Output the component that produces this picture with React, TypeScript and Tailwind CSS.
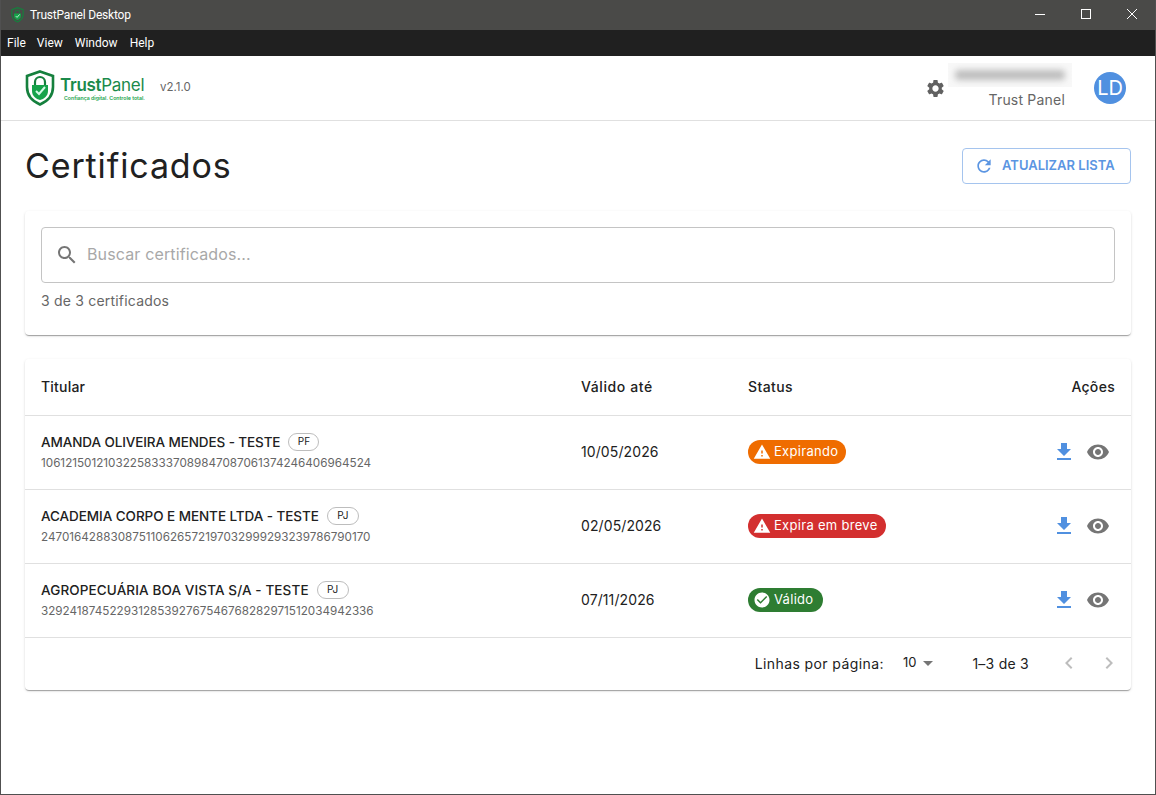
const sans = "font-['Inter',sans-serif]";
const cardShadow = "shadow-[0_2px_1px_-1px_rgba(0,0,0,0.2),0_1px_1px_0_rgba(0,0,0,0.14),0_1px_3px_0_rgba(0,0,0,0.12)]";

const rows = [
  { name: "AMANDA OLIVEIRA MENDES - TESTE", track: "tracking-[-0.1px]", kind: "PF", chip: "w-[31px]", id: "106121501210322583337089847087061374246406964524", date: "10/05/2026", status: "Expirando", color: "bg-[#ef6c00]", w: "w-[98px]", icon: "warn" },
  { name: "ACADEMIA CORPO E MENTE LTDA - TESTE", track: "tracking-[-0.06px]", kind: "PJ", chip: "w-[32px]", id: "247016428830875110626572197032999293239786790170", date: "02/05/2026", status: "Expira em breve", color: "bg-[#d32f2f]", w: "w-[138px]", icon: "warn" },
  { name: "AGROPECUÁRIA BOA VISTA S/A - TESTE", track: "tracking-[0.12px]", kind: "PJ", chip: "w-[32px]", id: "329241874522931285392767546768282971512034942336", date: "07/11/2026", status: "Válido", color: "bg-[#2e7d32]", w: "w-[75px]", icon: "ok" },
];

function Shield({ size }: { size: number }) {
  return (
    <svg width={size} height={size * 1.2} viewBox="0 0 30 36">
      <path d="M15 1.5 L28 6 V17 C28 26 22 31.5 15 34.5 C8 31.5 2 26 2 17 V6 Z" fill="none" stroke="#15803d" strokeWidth="2.6" />
      <path d="M10 15 V12 a5 5 0 0 1 10 0 V15" fill="none" stroke="#15803d" strokeWidth="2.2" />
      <path d="M7 15 H23 V21 C23 26 19 29 15 30 C11 29 7 26 7 21 Z" fill="#16a34a" />
      <path d="M11 21 L14 24 L20 17" fill="none" stroke="#d1fae5" strokeWidth="2" />
    </svg>
  );
}

function StatusIcon({ type }: { type: string }) {
  if (type === "warn") {
    return (
      <svg width="18" height="18" viewBox="0 0 24 24" fill="#fff">
        <path d="M1 21h22L12 2 1 21zm12-3h-2v-2h2v2zm0-4h-2v-4h2v4z" />
      </svg>
    );
  }
  return (
    <svg width="18" height="18" viewBox="0 0 24 24" fill="#fff">
      <path d="M12 2C6.48 2 2 6.48 2 12s4.48 10 10 10 10-4.48 10-10S17.52 2 12 2zm-2 15-5-5 1.41-1.41L10 14.17l7.59-7.59L19 8l-9 9z" />
    </svg>
  );
}

export default function App() {
  return (
    <div className={`h-[795px] w-[1156px] overflow-hidden flex flex-col bg-white border-l border-b border-r border-[#505050] ${sans}`}>
      <div className="h-[30px] shrink-0 bg-[#4a4a48] flex items-center -mx-px font-['Roboto',sans-serif]">
        <div className="ml-[11px]"><Shield size={13} /></div>
        <span className="ml-[6px] text-[12px] text-white tracking-[-0.2px]">TrustPanel Desktop</span>
        <div className="ml-auto mr-px flex items-center text-white">
          <svg width="46" height="30" viewBox="0 0 46 30"><path d="M18 14.5h10" stroke="#fff" strokeWidth="1" /></svg>
          <svg width="46" height="30" viewBox="0 0 46 30"><rect x="18.5" y="9.5" width="9" height="9" fill="none" stroke="#fff" /></svg>
          <svg width="46" height="30" viewBox="0 0 46 30"><path d="M18 9l10 10M28 9L18 19" stroke="#fff" strokeWidth="1" /></svg>
        </div>
      </div>
      <div className="h-[26px] shrink-0 bg-[#202020] flex items-center -mx-px pl-[7px] gap-[12px] text-[12px] text-white font-['Roboto',sans-serif]">
        <span>File</span><span className="-ml-px">View</span><span>Window</span><span>Help</span>
      </div>

      <header className="h-[65px] shrink-0 border-b border-[#e0e0e0] flex items-center pl-[24px] pr-[29px]">
        <Shield size={30} />
        <div className="ml-[5px] flex flex-col">
          <span className="text-[17px] leading-[20px] text-[#1b8a4b] tracking-[-0.3px]">
            <span className="font-semibold">Trust</span>Panel
          </span>
          <span className="ml-[4px] text-[5.2px] leading-[6px] text-[#16a34a] font-semibold">Confiança digital. Controle total.</span>
        </div>
        <span className="ml-[15px] text-[11.5px] text-[#666]">v2.1.0</span>
        <div className="ml-auto flex items-center">
          <svg width="21" height="21" viewBox="0 0 24 24" fill="#616161">
            <path d="M19.14 12.94c.04-.3.06-.61.06-.94 0-.32-.02-.64-.07-.94l2.03-1.58c.18-.14.23-.41.12-.61l-1.92-3.32c-.12-.22-.37-.29-.59-.22l-2.39.96c-.5-.38-1.03-.7-1.62-.94l-.36-2.54c-.04-.24-.24-.41-.48-.41h-3.84c-.24 0-.43.17-.47.41l-.36 2.54c-.59.24-1.13.57-1.62.94l-2.39-.96c-.22-.08-.47 0-.59.22L2.74 8.87c-.12.21-.08.47.12.61l2.03 1.58c-.05.3-.09.63-.09.94s.02.64.07.94l-2.03 1.58c-.18.14-.23.41-.12.61l1.92 3.32c.12.22.37.29.59.22l2.39-.96c.5.38 1.03.7 1.62.94l.36 2.54c.05.24.24.41.48.41h3.84c.24 0 .44-.17.47-.41l.36-2.54c.59-.24 1.13-.56 1.62-.94l2.39.96c.22.08.47 0 .59-.22l1.92-3.32c.12-.22.07-.47-.12-.61l-2.01-1.58zM12 15.6c-1.98 0-3.6-1.62-3.6-3.6s1.62-3.6 3.6-3.6 3.6 1.62 3.6 3.6-1.62 3.6-3.6 3.6z" />
          </svg>
          <div className="ml-[2px] w-[124px] flex flex-col items-end pb-[3px]">
            <div className="h-[24px] w-[124px] bg-[#f8f8f8] flex items-center justify-center">
              <div className="h-[10px] w-[110px] bg-[#bdbdbd] blur-[3px] rounded" />
            </div>
            <span className="text-[14px] leading-[20px] text-[#666] mr-[7px] mt-[3px] tracking-[0.2px]">Trust Panel</span>
          </div>
          <div className="ml-[22px] w-[32px] h-[32px] rounded-full bg-[#5090e0] text-white text-[20px] flex items-center justify-center">LD</div>
        </div>
      </header>

      <main className="flex-1 bg-white px-[24px]">
        <div className="flex items-center justify-between h-[90px]">
          <h1 className="text-[34px] leading-none text-[#212121] tracking-[0.87px]">Certificados</h1>
          <button className="h-[36px] w-[169px] border border-[#a5c4ee] rounded flex items-center pl-[11px] gap-[8px] text-[#5b95e2] text-[13px] font-semibold">
            <svg width="20" height="20" viewBox="0 0 24 24" fill="#5b95e2">
              <path d="M17.65 6.35C16.2 4.9 14.21 4 12 4c-4.42 0-7.99 3.58-7.99 8s3.57 8 7.99 8c3.73 0 6.84-2.55 7.73-6h-2.08c-.82 2.33-3.04 4-5.65 4-3.31 0-6-2.69-6-6s2.69-6 6-6c1.66 0 3.1.69 4.22 1.78L13 11h7V4l-2.35 2.35z" />
            </svg>
            ATUALIZAR LISTA
          </button>
        </div>

        <section className={`h-[124px] rounded ${cardShadow} px-[16px] pt-[16px]`}>
          <div className="h-[56px] border border-[#c4c4c4] rounded flex items-center pl-[13px]">
            <svg width="24" height="24" viewBox="0 0 24 24" fill="#757575">
              <path d="M15.5 14h-.79l-.28-.27C15.41 12.59 16 11.11 16 9.5 16 5.91 13.09 3 9.5 3S3 5.91 3 9.5 5.91 16 9.5 16c1.61 0 3.09-.59 4.23-1.57l.27.28v.79l5 4.99L20.49 19l-4.99-5zm-6 0C7.01 14 5 11.99 5 9.5S7.01 5 9.5 5 14 7.01 14 9.5 11.99 14 9.5 14z" />
            </svg>
            <span className="ml-[8px] pb-[2px] text-[16px] text-[#a8a8a8] tracking-[0.14px]">Buscar certificados...</span>
          </div>
          <p className="mt-[8px] text-[14px] leading-[20px] text-[#666] tracking-[0.2px]">3 de 3 certificados</p>
        </section>

        <section className={`mt-[24px] rounded ${cardShadow}`}>
          <div className="h-[57px] border-b border-[#e0e0e0] flex items-center px-[16px] pb-[2px] text-[14px] font-medium text-[#212121]">
            <span className="w-[540px] tracking-[0.2px]">Titular</span>
            <span className="w-[167px] tracking-[0.6px]">Válido até</span>
            <span className="tracking-[0.4px]">Status</span>
            <span className="ml-auto tracking-[0.3px]">Ações</span>
          </div>
          {rows.map((r) => (
            <div key={r.id} className="h-[74px] border-b border-[#e0e0e0] flex items-center px-[16px] pb-[2px]">
              <div className="w-[540px]">
                <div className="flex items-center">
                  <span className={`text-[13.5px] leading-[20px] font-medium text-[#212121] ${r.track}`}>{r.name}</span>
                  <span className={`ml-[8px] h-[18px] ${r.chip} border border-[#bdbdbd] rounded-full text-[10px] flex items-center justify-center text-[#212121]`}>{r.kind}</span>
                </div>
                <div className="mt-[2px] text-[11.7px] leading-[18px] text-[#666]">{r.id}</div>
              </div>
              <span className="w-[167px] text-[14px] text-[#212121] tracking-[0.1px]">{r.date}</span>
              <span className={`${r.w} ${r.color} h-[24px] rounded-full flex items-center pl-[5px] gap-[3px] text-white text-[13px] tracking-[0.3px]`}>
                <StatusIcon type={r.icon} />
                <span>{r.status}</span>
              </span>
              <div className="ml-auto mr-[5px] flex items-center gap-[10px]">
                <svg width="24" height="24" viewBox="0 0 24 24" fill="#5090e0"><path d="M19 9h-4V3H9v6H5l7 7 7-7zM5 18v2h14v-2H5z" /></svg>
                <svg width="24" height="24" viewBox="0 0 24 24" fill="#757575"><path d="M12 4.5C7 4.5 2.73 7.61 1 12c1.73 4.39 6 7.5 11 7.5s9.27-3.11 11-7.5c-1.73-4.39-6-7.5-11-7.5zM12 17c-2.76 0-5-2.24-5-5s2.24-5 5-5 5 2.24 5 5-2.24 5-5 5zm0-8c-1.66 0-3 1.34-3 3s1.34 3 3 3 3-1.34 3-3-1.34-3-3-3z" /></svg>
              </div>
            </div>
          ))}
          <div className="h-[52px] flex items-center justify-end pr-[10px] pb-[2px] text-[14px] text-[#212121]">
            <span className="tracking-[0.4px]">Linhas por página:</span>
            <span className="ml-[19px] text-[13px]">10</span>
            <svg width="24" height="24" viewBox="0 0 24 24" fill="#757575"><path d="M7 10l5 5 5-5z" /></svg>
            <span className="ml-[32px] tracking-[0.25px]">1–3 de 3</span>
            <svg className="ml-[28px]" width="24" height="24" viewBox="0 0 24 24" fill="#bdbdbd"><path d="M15.41 7.41 14 6l-6 6 6 6 1.41-1.41L10.83 12z" /></svg>
            <svg className="ml-[16px]" width="24" height="24" viewBox="0 0 24 24" fill="#bdbdbd"><path d="M10 6 8.59 7.41 13.17 12l-4.58 4.59L10 18l6-6z" /></svg>
          </div>
        </section>
      </main>
    </div>
  );
}
